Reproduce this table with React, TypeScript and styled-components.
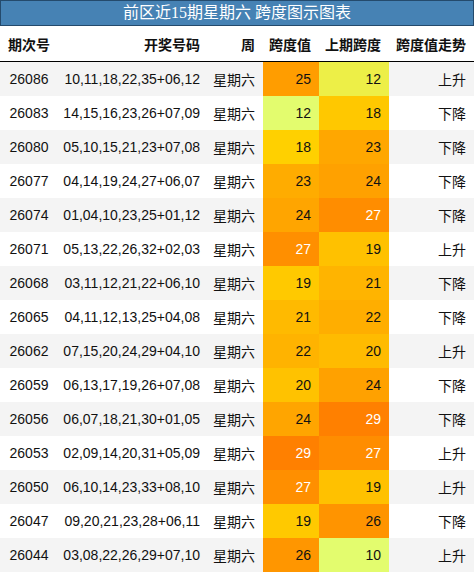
import React from "react";
import styled, { createGlobalStyle } from "styled-components";

const GlobalStyle = createGlobalStyle`
  body {
    margin: 0;
    background: #ffffff;
    font-family: "Liberation Sans", "Noto Sans CJK SC", sans-serif;
  }
`;

type Row = { issue: string; nums: string; week: string; span: number; prev: number; trend: string };

const rows: Row[] = [
  { issue: "26086", nums: "10,11,18,22,35+06,12", week: "星期六", span: 25, prev: 12, trend: "上升" },
  { issue: "26083", nums: "14,15,16,23,26+07,09", week: "星期六", span: 12, prev: 18, trend: "下降" },
  { issue: "26080", nums: "05,10,15,21,23+07,08", week: "星期六", span: 18, prev: 23, trend: "下降" },
  { issue: "26077", nums: "04,14,19,24,27+06,07", week: "星期六", span: 23, prev: 24, trend: "下降" },
  { issue: "26074", nums: "01,04,10,23,25+01,12", week: "星期六", span: 24, prev: 27, trend: "下降" },
  { issue: "26071", nums: "05,13,22,26,32+02,03", week: "星期六", span: 27, prev: 19, trend: "上升" },
  { issue: "26068", nums: "03,11,12,21,22+06,10", week: "星期六", span: 19, prev: 21, trend: "下降" },
  { issue: "26065", nums: "04,11,12,13,25+04,08", week: "星期六", span: 21, prev: 22, trend: "下降" },
  { issue: "26062", nums: "07,15,20,24,29+04,10", week: "星期六", span: 22, prev: 20, trend: "上升" },
  { issue: "26059", nums: "06,13,17,19,26+07,08", week: "星期六", span: 20, prev: 24, trend: "下降" },
  { issue: "26056", nums: "06,07,18,21,30+01,05", week: "星期六", span: 24, prev: 29, trend: "下降" },
  { issue: "26053", nums: "02,09,14,20,31+05,09", week: "星期六", span: 29, prev: 27, trend: "上升" },
  { issue: "26050", nums: "06,10,14,23,33+08,10", week: "星期六", span: 27, prev: 19, trend: "上升" },
  { issue: "26047", nums: "09,20,21,23,28+06,11", week: "星期六", span: 19, prev: 26, trend: "下降" },
  { issue: "26044", nums: "03,08,22,26,29+07,10", week: "星期六", span: 26, prev: 10, trend: "上升" },
];

// colour scale: light lime -> gold -> dark orange
const lerp = (a: number, b: number, f: number) => Math.round(a + (b - a) * f);
function heat(v: number, min: number, max: number) {
  const t = (v - min) / (max - min);
  let c: number[];
  if (t < 0.3) {
    const f = t / 0.3;
    c = [lerp(227, 255, f), lerp(252, 215, f), lerp(110, 0, f)];
  } else {
    const f = (t - 0.3) / 0.7;
    c = [255, lerp(215, 128, f), 0];
  }
  return { background: `rgb(${c[0]},${c[1]},${c[2]})`, color: t > 0.85 ? "#ffffff" : "#111111" };
}

const spanMin = Math.min(...rows.map(r => r.span));
const spanMax = Math.max(...rows.map(r => r.span));
const prevMin = Math.min(...rows.map(r => r.prev));
const prevMax = Math.max(...rows.map(r => r.prev));

const Wrapper = styled.div`
  width: 474px;
`;

const Title = styled.div`
  box-sizing: border-box;
  height: 26px;
  background: #4682b4;
  border: 1px solid #244a6c;
  color: #ffffff;
  font-family: "Liberation Serif", "Noto Sans CJK SC", serif;
  font-size: 16px;
  line-height: 24px;
  text-align: center;
`;

const Table = styled.table`
  width: 474px;
  border-collapse: collapse;
  table-layout: fixed;
  font-size: 14px;
  color: #111111;
`;

const HeadCell = styled.th<{ $left?: boolean }>`
  height: 35px;
  padding: ${p => (p.$left ? "0" : "0 8px 0 0")};
  font-weight: bold;
  text-align: ${p => (p.$left ? "center" : "right")};
  border-bottom: 1px solid #000000;
  white-space: nowrap;
`;

const BodyRow = styled.tr<{ $odd: boolean }>`
  background: ${p => (p.$odd ? "#f4f4f4" : "#ffffff")};
`;

const Cell = styled.td<{ $left?: boolean }>`
  height: 34px;
  padding: ${p => (p.$left ? "0" : "0 8px 0 0")};
  text-align: ${p => (p.$left ? "center" : "right")};
  white-space: nowrap;
`;

export default function App() {
  return (
    <Wrapper>
      <GlobalStyle />
      <Title>前区近15期星期六 跨度图示图表</Title>
      <Table>
        <colgroup>
          <col style={{ width: 58 }} />
          <col style={{ width: 150 }} />
          <col style={{ width: 55 }} />
          <col style={{ width: 56 }} />
          <col style={{ width: 70 }} />
          <col style={{ width: 85 }} />
        </colgroup>
        <thead>
          <tr>
            <HeadCell $left>期次号</HeadCell>
            <HeadCell>开奖号码</HeadCell>
            <HeadCell>周</HeadCell>
            <HeadCell>跨度值</HeadCell>
            <HeadCell>上期跨度</HeadCell>
            <HeadCell>跨度值走势</HeadCell>
          </tr>
        </thead>
        <tbody>
          {rows.map((r, i) => (
            <BodyRow key={r.issue} $odd={i % 2 === 0}>
              <Cell $left>{r.issue}</Cell>
              <Cell>{r.nums}</Cell>
              <Cell>{r.week}</Cell>
              <Cell style={heat(r.span, spanMin, spanMax)}>{r.span}</Cell>
              <Cell style={heat(r.prev, prevMin, prevMax)}>{r.prev}</Cell>
              <Cell>{r.trend}</Cell>
            </BodyRow>
          ))}
        </tbody>
      </Table>
    </Wrapper>
  );
}
